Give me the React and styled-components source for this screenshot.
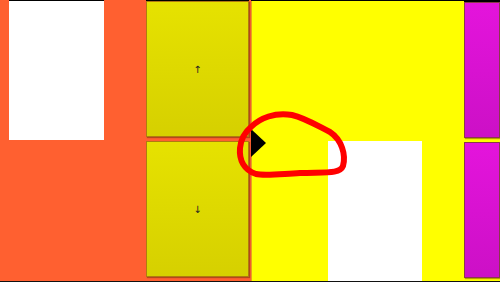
import React from 'react';
import styled, { createGlobalStyle } from 'styled-components';

const Global = createGlobalStyle`
  html, body {
    margin: 0;
    padding: 0;
    background: #000;
  }
  body {
    font-family: "DejaVu Sans", sans-serif;
  }
`;

const Stage = styled.div`
  position: relative;
  width: 500px;
  height: 281px;
  display: flex;
  flex-direction: row;
  border-bottom: 1px solid #111;
  overflow: hidden;
`;

const OrangeSide = styled.div`
  width: 251px;
  display: flex;
  flex-direction: row;
  background: #ff6030;
`;

const LeftPane = styled.div`
  width: 137px;
  padding-left: 9px;
  padding-top: 1px;
`;

const Sheet = styled.div`
  width: ${(p) => p.w}px;
  height: ${(p) => p.h}px;
  margin-top: ${(p) => p.top || 0}px;
  margin-left: ${(p) => p.left || 0}px;
  background: #fff;
  box-shadow: ${(p) => (p.capped ? '0 -1px 0 #000' : 'none')};
`;

const ButtonColumn = styled.div`
  width: ${(p) => p.w}px;
  display: flex;
  flex-direction: column;
  gap: 4px;
  padding-top: 1px;
  box-shadow: inset 0 1px 0 #000;
`;

const ScrollButton = styled.div`
  height: 134px;
  display: flex;
  align-items: center;
  justify-content: center;
  border: 1px solid ${(p) => p.edge};
  background: linear-gradient(180deg, ${(p) => p.from} 0%, ${(p) => p.to} 100%);
  box-shadow: 1px 1px 1px rgba(90, 40, 0, 0.45);
  font-size: 10px;
  color: #222;
`;

const YellowPane = styled.div`
  flex: 1;
  display: flex;
  flex-direction: row;
  justify-content: space-between;
  background: #ffff00;
  border-top: 1px solid #000;
  box-shadow: inset 1px 0 0 #e8a020;
`;

const Overlay = styled.svg`
  position: absolute;
  left: 0;
  top: 0;
  pointer-events: none;
`;

const yellowBtn = { from: '#e6e200', to: '#d6d000', edge: '#b07a10' };
const magentaBtn = { from: '#e414dc', to: '#cc10c6', edge: '#8a3a4a' };

export default function App() {
  return (
    <>
      <Global />
      <Stage>
        <OrangeSide>
          <LeftPane>
            <Sheet w={95} h={139} capped />
          </LeftPane>
          <ButtonColumn w={103}>
            <ScrollButton {...yellowBtn}>↑</ScrollButton>
            <ScrollButton {...yellowBtn}>↓</ScrollButton>
          </ButtonColumn>
        </OrangeSide>
        <YellowPane>
          <Sheet w={94} h={140} top={140} left={77} />
          <ButtonColumn w={36}>
            <ScrollButton {...magentaBtn} />
            <ScrollButton {...magentaBtn} />
          </ButtonColumn>
        </YellowPane>
        <Overlay width="500" height="282" viewBox="0 0 500 282">
          <polygon points="251,129 266,143 251,157" fill="#000" />
          <path
            d="M251,127 C260,118 275,112 292,115 C305,118 318,126 330,132 C342,140 346,155 343,166 C340,174 326,172 300,173 C280,174 265,176 256,174 C244,170 239,160 240,148 C241,139 245,132 251,127"
            fill="none"
            stroke="#ff0000"
            strokeWidth="6"
            strokeLinecap="round"
            strokeLinejoin="round"
          />
        </Overlay>
      </Stage>
    </>
  );
}
